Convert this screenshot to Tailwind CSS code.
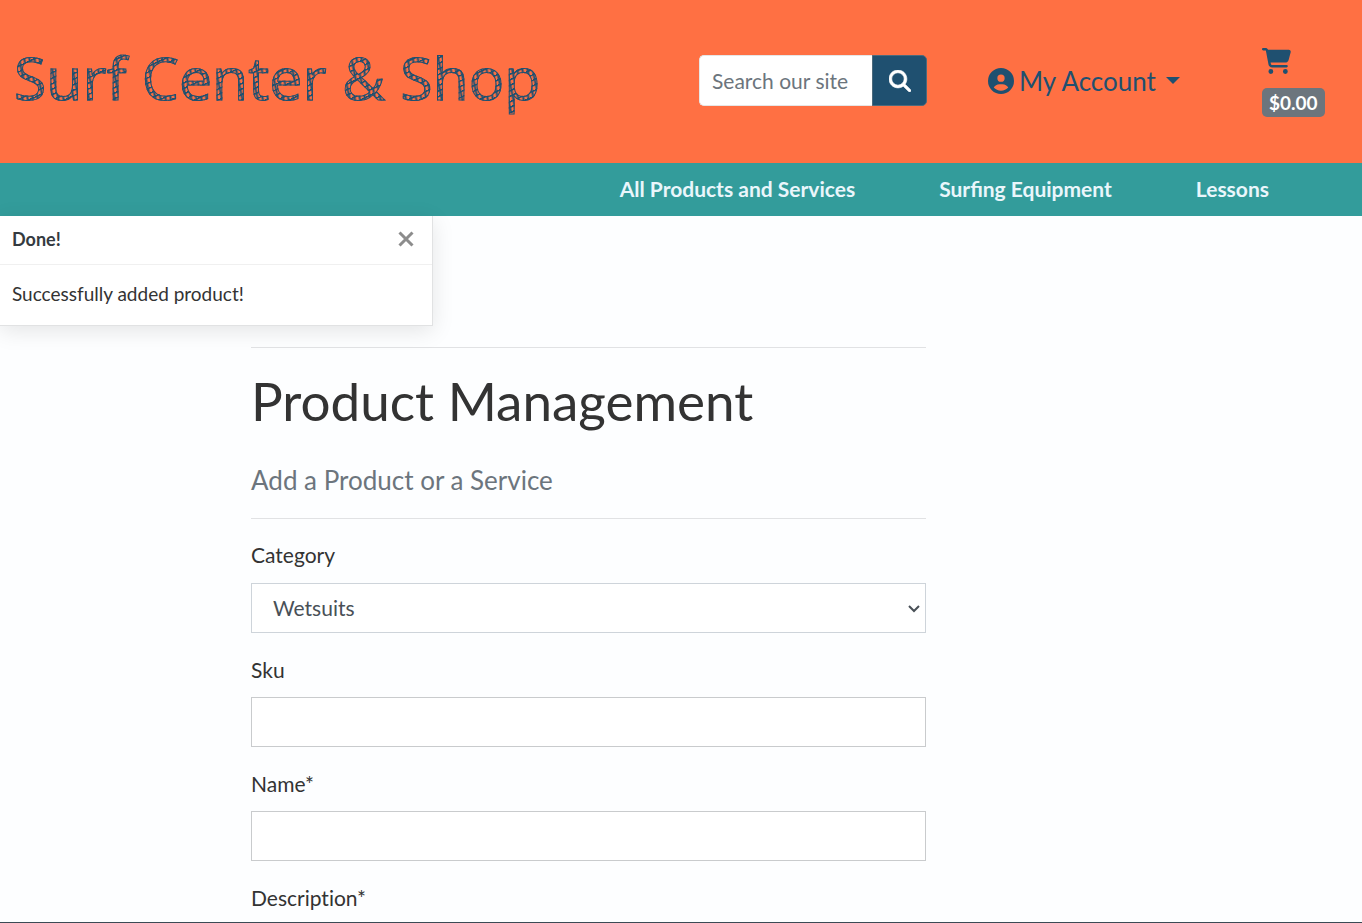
<!DOCTYPE html>
<html lang="en">
<head>
<meta charset="utf-8">
<meta name="viewport" content="width=device-width, initial-scale=1">
<title>Surf Center &amp; Shop</title>
<script src="https://cdn.jsdelivr.net/npm/@tailwindcss/browser@4"></script>
</head>
<body class="flex min-h-screen flex-col bg-[#fdfeff] font-['Lato',sans-serif] text-[21px] leading-8 text-[#333]">
<header class="grid grid-cols-[699fr_289fr_274fr_100fr] items-center bg-[#ff7043] h-[163px] pb-[2px] text-[#1f5070]">
  <a href="#" class="mb-2 pl-[14px] font-['Open_Sans',sans-serif] text-[59px] leading-[72px] whitespace-nowrap bg-[repeating-linear-gradient(155deg,#1f5070_0px,#1f5070_1px,transparent_2px,transparent_5px),repeating-linear-gradient(78deg,#1f5070_0px,#ff7043_2px,#ff7043_3px,#1f5070_5px)] bg-clip-text text-transparent [-webkit-text-stroke:1px_#1f5070]">Surf Center &amp; Shop</a>
  <form class="flex h-[51px] w-[228px]">
    <input type="text" aria-label="Search our site" placeholder="Search our site" class="min-w-0 flex-1 rounded-l-[5px] border border-r-0 border-[#e6e6e6] bg-white pl-3 text-[21px] placeholder:text-[#6c757d]">
    <button type="button" aria-label="Search" class="flex w-[55px] items-center justify-center rounded-r-[5px] border border-[#4c6a7c] bg-[#1f5070] text-white">
      <svg class="size-[22px]" viewBox="0 0 512 512" fill="currentColor" stroke="currentColor" stroke-width="14"><path d="M416 208c0 45.900-14.900 88.300-40 122.700L502.600 457.400c12.500 12.500 12.500 32.800 0 45.300s-32.800 12.500-45.300 0L330.700 376c-34.400 25.200-76.800 40-122.700 40C93.100 416 0 322.900 0 208S93.100 0 208 0S416 93.100 416 208zM208 352a144 144 0 1 0 0-288 144 144 0 1 0 0 288z"/></svg>
    </button>
  </form>
  <button type="button" class="flex items-center text-[26px] whitespace-nowrap">
    <svg class="mr-[5px] size-[26px]" viewBox="0 0 512 512" fill="currentColor"><path d="M399 384.200C376.900 345.800 335.400 320 288 320H224c-47.400 0-88.900 25.800-111 64.200c35.200 39.200 86.200 63.800 143 63.800s107.800-24.700 143-63.800zM0 256a256 256 0 1 1 512 0A256 256 0 1 1 0 256zm256 16a72 72 0 1 0 0-144 72 72 0 1 0 0 144z"/></svg>
    My Account
    <svg class="ml-[10px] h-[7px] w-[14px]" viewBox="0 0 14 7" fill="currentColor"><path d="M0 0h14L7 7z"/></svg>
  </button>
  <a href="#" class="flex flex-col items-start gap-[14px] pt-1">
    <svg class="h-[26px] w-[29px]" viewBox="0 0 576 512" fill="currentColor"><path d="M0 24C0 10.700 10.700 0 24 0H69.500c22 0 41.500 12.800 50.600 32h411c26.300 0 45.500 25 38.600 50.400l-41 152.300c-8.500 31.400-37 53.300-69.500 53.300H170.700l5.400 28.500c2.200 11.300 12.100 19.500 23.600 19.500H488c13.300 0 24 10.700 24 24s-10.700 24-24 24H199.700c-34.600 0-64.300-24.600-70.700-58.500L77.400 54.500c-.7-3.800-4-6.500-7.900-6.500H24C10.700 48 0 37.300 0 24zM128 464a48 48 0 1 1 96 0 48 48 0 1 1 -96 0zm336-48a48 48 0 1 1 0 96 48 48 0 1 1 0-96z"/></svg>
    <span class="rounded-[5px] bg-[#6c757d] px-[7px] text-[19px] leading-[29px] font-bold text-white">$0.00</span>
  </a>
</header>
<nav class="flex h-[53px] items-center justify-end gap-[84px] bg-[#339c9b] pr-[93px] pb-[2px] text-[21px] font-bold text-[#eaf6fb]">
  <a href="#">All Products and Services</a>
  <a href="#">Surfing Equipment</a>
  <a href="#">Lessons</a>
</nav>
<div class="relative flex-1">
  <div role="status" class="absolute top-0 left-0 z-10 w-[433px] border-r border-b border-[#e1e2e3] bg-white text-[19px] shadow-[0_5px_21px_rgba(0,0,0,0.1)]">
    <div class="flex h-[49px] items-center justify-between border-b border-[#f0f0f0] pr-[18px] pb-[2px] pl-3 text-[#343a40]">
      <strong class="text-[18px]">Done!</strong>
      <button type="button" aria-label="Close" class="text-[#8c8c8c]"><svg class="size-4" viewBox="0 0 16 16" fill="none" stroke="currentColor" stroke-width="3"><path d="M1.500 1.500l13 13M14.500 1.500l-13 13"/></svg></button>
    </div>
    <p class="px-3 pt-[13px] pb-[15px]">Successfully added product!</p>
  </div>
  <main class="grid grid-cols-[251fr_675fr_436fr]">
    <div class="col-start-2 pt-[131px] [font-variant-ligatures:none]">
      <hr class="border-[#e1e2e4]">
      <h1 class="mt-[21px] text-[53px] leading-[64px]">Product Management</h1>
      <h2 class="mt-[31px] text-[26px] leading-8 text-[#6c757d]">Add a Product or a Service</h2>
      <hr class="mt-[22px] border-[#e1e2e4]">
      <form class="mt-5 flex flex-col gap-[21px]">
        <div class="flex flex-col gap-3">
          <label for="category">Category</label>
          <div class="relative">
            <select id="category" class="h-[50px] w-full appearance-none border border-[#ced4da] bg-white px-[21px] text-[#495057]"><option>Wetsuits</option></select>
            <svg class="pointer-events-none absolute top-[22px] right-[6px] h-[8px] w-[12px] text-[#495057]" viewBox="0 0 12 8" fill="none" stroke="currentColor" stroke-width="2"><path d="M1 1l5 5 5-5"/></svg>
          </div>
        </div>
        <div class="flex flex-col gap-[11px]">
          <label for="sku">Sku</label>
          <input id="sku" type="text" class="h-[50px] border border-[#c9cbcd] bg-white px-[21px]">
        </div>
        <div class="flex flex-col gap-[11px]">
          <label for="name">Name*</label>
          <input id="name" type="text" class="h-[50px] border border-[#c9cbcd] bg-white px-[21px]">
        </div>
        <p>Description*</p>
      </form>
    </div>
  </main>
</div>
<footer class="h-px bg-[#3b4a54]"></footer>
</body>
</html>
